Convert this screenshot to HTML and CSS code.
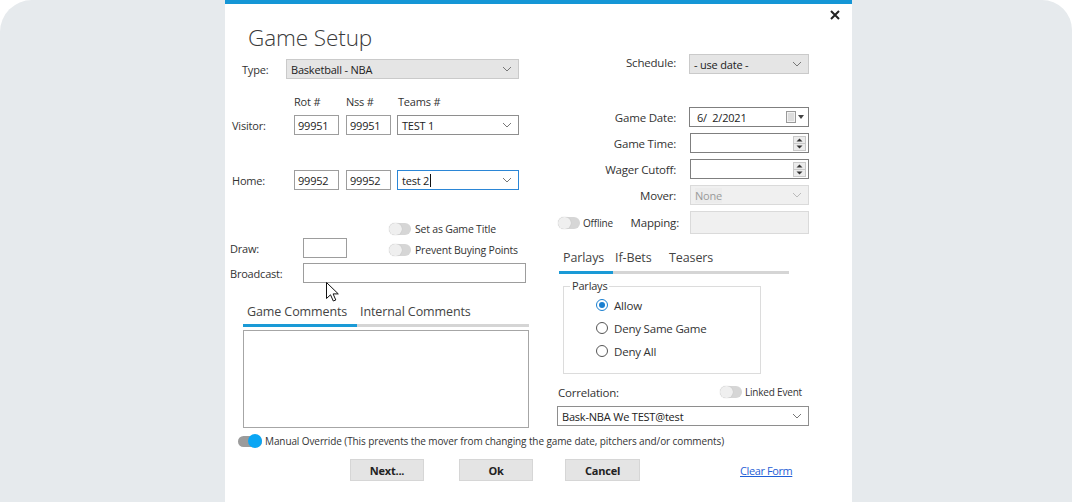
FILE: index.html
```html
<!DOCTYPE html>
<html>
<head>
<meta charset="utf-8">
<title>Game Setup</title>
<link rel="stylesheet" href="styles.css">
</head>
<body>
<div class="frame">
  <div class="dialog">
    <div class="cols">
      <div class="left">
        <h1 class="title">Game Setup</h1>
        <div class="row type-row">
          <span class="lbl w44">Type:</span>
          <div class="field select gray w233"><span>Basketball - NBA</span><svg class="chev" width="10" height="6" viewBox="0 0 10 6"><path d="M1 1l4 4 4-4" fill="none" stroke="#777" stroke-width="1"/></svg></div>
        </div>
        <div class="row heads">
          <span class="hd w52">Rot #</span><span class="hd w52">Nss #</span><span class="hd">Teams #</span>
        </div>
        <div class="row team-row visitor">
          <span class="lbl w62">Visitor:</span>
          <div class="field box w45">99951</div>
          <div class="field box w45 gap7">99951</div>
          <div class="field select combo w122 gap6"><span>TEST 1</span><svg class="chev" width="10" height="6" viewBox="0 0 10 6"><path d="M1 1l4 4 4-4" fill="none" stroke="#777" stroke-width="1"/></svg></div>
        </div>
        <div class="row team-row home">
          <span class="lbl w62">Home:</span>
          <div class="field box w45">99952</div>
          <div class="field box w45 gap7">99952</div>
          <div class="field select combo focus w122 gap6"><span>test 2<i class="caret"></i></span><svg class="chev" width="10" height="6" viewBox="0 0 10 6"><path d="M1 1l4 4 4-4" fill="none" stroke="#777" stroke-width="1"/></svg></div>
        </div>
        <div class="row tg-row1">
          <span class="toggle"><i></i></span><span class="tg-text">Set as Game Title</span>
        </div>
        <div class="row draw-row">
          <span class="lbl w73">Draw:</span>
          <div class="field box w44"></div>
          <span class="toggle tg-prevent"><i></i></span><span class="tg-text tg-prevent">Prevent Buying Points</span>
        </div>
        <div class="row bcast-row">
          <span class="lbl w73">Broadcast:</span>
          <div class="field box w223"></div>
        </div>
        <div class="row ctabs">
          <span class="tab w113">Game Comments</span><span class="tab">Internal Comments</span>
        </div>
        <div class="tabbar cbar"><div class="tabbar-on w114"></div></div>
        <div class="comments"></div>
      </div>

      <div class="right">
        <div class="close-row">
          <svg class="close" width="10" height="10" viewBox="0 0 10 10"><path d="M1 1l8 8M9 1l-8 8" stroke="#222" stroke-width="2"/></svg>
        </div>
        <div class="frow schedule">
          <span class="rlbl">Schedule:</span>
          <div class="field select gray w120"><span>- use date -</span><svg class="chev" width="10" height="6" viewBox="0 0 10 6"><path d="M1 1l4 4 4-4" fill="none" stroke="#777" stroke-width="1"/></svg></div>
        </div>
        <div class="frow gdate">
          <span class="rlbl">Game Date:</span>
          <div class="field dark w120"><span class="pad9">6/&nbsp; 2/2021</span>
            <svg class="cal" width="20" height="12" viewBox="0 0 20 12"><rect x="0.5" y="0.5" width="9" height="11" fill="#f2f2f2" stroke="#9a9a9a"/><path d="M2 3h6M2 5h6M2 7h6M2 9h6" stroke="#c8c8c8"/><path d="M12 4h6l-3 4z" fill="#444"/></svg>
          </div>
        </div>
        <div class="frow tight">
          <span class="rlbl">Game Time:</span>
          <div class="field dark w119"><span></span>
            <svg class="spin" width="13" height="15" viewBox="0 0 13 15"><rect x="0.5" y="0.5" width="12" height="14" fill="#ececec" stroke="#c9c9c9"/><path d="M0.5 7.5h12" stroke="#c9c9c9"/><path d="M3.5 5.5h6l-3-3z" fill="#333"/><path d="M3.5 9.5h6l-3 3z" fill="#333"/></svg>
          </div>
        </div>
        <div class="frow tight">
          <span class="rlbl">Wager Cutoff:</span>
          <div class="field dark w119"><span></span>
            <svg class="spin" width="13" height="15" viewBox="0 0 13 15"><rect x="0.5" y="0.5" width="12" height="14" fill="#ececec" stroke="#c9c9c9"/><path d="M0.5 7.5h12" stroke="#c9c9c9"/><path d="M3.5 5.5h6l-3-3z" fill="#333"/><path d="M3.5 9.5h6l-3 3z" fill="#333"/></svg>
          </div>
        </div>
        <div class="frow tight">
          <span class="rlbl">Mover:</span>
          <div class="field disabled w119"><span class="dis-in">None</span><svg class="chev" width="10" height="6" viewBox="0 0 10 6"><path d="M1 1l4 4 4-4" fill="none" stroke="#bbb" stroke-width="1"/></svg></div>
        </div>
        <div class="frow tight map-row">
          <span class="lblcol"><span class="toggle"><i></i></span><span class="tg-text small">Offline</span><span class="map-lbl">Mapping:</span></span>
          <div class="field disabled tall w119"></div>
        </div>
        <div class="row ptabs">
          <span class="tab w52">Parlays</span><span class="tab w54">If-Bets</span><span class="tab">Teasers</span>
        </div>
        <div class="tabbar pbar"><div class="tabbar-on w54"></div></div>
        <div class="group">
          <span class="legend">Parlays</span>
          <div class="radio-row"><span class="radio on"></span><span>Allow</span></div>
          <div class="radio-row"><span class="radio"></span><span>Deny Same Game</span></div>
          <div class="radio-row"><span class="radio"></span><span>Deny All</span></div>
        </div>
        <div class="row corr-row">
          <span class="corr-lbl">Correlation:</span>
          <span class="toggle"><i></i></span><span class="tg-text small">Linked Event</span>
        </div>
        <div class="field select combo corr-select"><span>Bask-NBA We TEST@test</span><svg class="chev" width="10" height="6" viewBox="0 0 10 6"><path d="M1 1l4 4 4-4" fill="none" stroke="#777" stroke-width="1"/></svg></div>
      </div>
    </div>

    <div class="row mo-row">
      <span class="toggle mo"><i></i></span><span class="mo-text">Manual Override (This prevents the mover from changing the game date, pitchers and/or comments)</span>
    </div>
    <div class="row btn-row">
      <button class="btn">Next...</button>
      <button class="btn ok">Ok</button>
      <button class="btn cancel">Cancel</button>
      <a class="clear" href="#">Clear Form</a>
    </div>

    <svg class="cursor" width="13" height="20" viewBox="0 0 13 20"><path d="M0.5 0.5V16.5L4.5 12.8L7.3 19L9.8 18L7.1 11.9H12.3Z" fill="#fff" stroke="#111" stroke-width="1" stroke-linejoin="round"/></svg>
  </div>
</div>
</body>
</html>
```

FILE: styles.css
```css
* { box-sizing: border-box; }
html, body { margin: 0; padding: 0; background: #ffffff; }
body {
  width: 1072px;
  height: 502px;
  overflow: hidden;
  font-family: "Open Sans", "Noto Sans", "Liberation Sans", sans-serif;
  color: #333;
}
.frame {
  height: 502px;
  background: #e6eaed;
  border-radius: 32px 30px 0 0;
  display: flex;
  padding-left: 225px;
}
.dialog {
  position: relative;
  width: 627px;
  height: 502px;
  background: #fff;
  border-top: 4px solid #1596d6;
}
.cols { display: flex; }
.left { width: 315px; }
.right { width: 312px; }
.row { display: flex; align-items: center; }

.title {
  margin: 19px 0 0 23px;
  font-size: 22.5px;
  line-height: 30px;
  font-weight: 300;
  color: #3a3a3a;
  letter-spacing: -0.1px;
}
.lbl, .hd, .rlbl, .corr-lbl, .map-lbl, .tg-text, .radio-row, .legend {
  font-size: 11px;
  color: #333;
  letter-spacing: -0.2px;
}
.w44 { width: 44px; flex: none; }
.w45 { width: 45px; flex: none; }
.w52 { width: 52px; flex: none; }
.w54 { width: 54px; flex: none; }
.w62 { width: 62px; flex: none; }
.w73 { width: 73px; flex: none; }
.w113 { width: 113px; flex: none; }
.w114 { width: 114px; flex: none; }
.w119 { width: 119px; flex: none; }
.w120 { width: 120px; flex: none; }
.w122 { width: 122px; flex: none; }
.w223 { width: 223px; flex: none; }
.w233 { width: 233px; flex: none; }
.gap6 { margin-left: 6px; }
.gap7 { margin-left: 7px; }

.field {
  height: 20px;
  border: 1px solid #a9a9a9;
  background: #fff;
  font-size: 11px;
  color: #222;
  display: flex;
  align-items: center;
  padding-left: 4px;
  letter-spacing: -0.2px;
}
.select { justify-content: space-between; padding-right: 6px; }
.select.gray { background: #e5e5e5; border-color: #cacaca; }
.combo { border-color: #8e8e8e; }
.combo.focus { border-color: #2b86d6; }
.box { border-color: #9d9d9d; padding-left: 3px; }
.dark { border-color: #7f7f7f; justify-content: space-between; padding-right: 2px; }
.pad9 { padding-left: 3px; }
.disabled {
  background: #f0f0f0;
  border-color: #dadada;
  color: #9a9a9a;
  justify-content: space-between;
  padding-right: 6px;
}
.dis-in { background: #ececec; }
.tall { height: 23px; }
.caret {
  display: inline-block;
  width: 1px;
  height: 13px;
  background: #111;
  vertical-align: -2px;
  margin-left: 1px;
}
.chev { flex: none; }

.type-row { margin-top: 6px; height: 20px; padding-left: 17px; }
.heads { margin-top: 15px; height: 14px; padding-left: 69px; }
.team-row { height: 20px; padding-left: 7px; }
.visitor { margin-top: 7px; }
.home { margin-top: 35px; }
.tg-row1 { margin-top: 32px; height: 14px; padding-left: 164px; }
.draw-row { margin-top: 2px; height: 20px; padding-left: 5px; }
.draw-row .toggle.tg-prevent { margin-left: 42px; margin-top: 4px; }
.draw-row .tg-text.tg-prevent { margin-top: 4px; }
.bcast-row { margin-top: 5px; height: 20px; padding-left: 5px; }

.toggle {
  flex: none;
  position: relative;
  width: 22px;
  height: 12px;
  border-radius: 6px;
  background: #d6d6d6;
}
.toggle i {
  position: absolute;
  left: 0;
  top: 0;
  width: 13px;
  height: 12px;
  border-radius: 6px;
  background: #efefef;
  box-shadow: 0 0 1px #b0b0b0;
}
.tg-text { margin-left: 4px; font-size: 10.5px; }
.tg-text.small { font-size: 10px; margin-left: 3px; }

.tab { font-size: 12.5px; color: #444; letter-spacing: -0.1px; }
.ctabs { margin-top: 19px; height: 18px; padding-left: 22px; }
.tabbar { height: 3px; background: #d5d5d5; }
.tabbar-on { height: 3px; background: #1a9ad6; }
.cbar { margin: 4px 0 0 18px; width: 286px; }
.comments {
  margin: 3px 0 0 18px;
  width: 286px;
  height: 98px;
  border: 1px solid #a6a6a6;
}

.close-row { padding-top: 6px; height: 16px; padding-left: 290px; }
.close { display: block; }
.frow { display: flex; align-items: center; height: 20px; }
.rlbl { width: 136px; flex: none; text-align: right; margin-right: 13px; font-size: 11.5px; }
.tight .rlbl { margin-right: 14px; }
.schedule { margin-top: 34px; }
.schedule .rlbl { position: relative; top: -2px; }
.gdate { margin-top: 33px; }
.tight { margin-top: 6px; }
.map-row { height: 23px; }
.lblcol {
  width: 136px;
  flex: none;
  display: flex;
  align-items: center;
  padding-left: 18px;
  margin-right: 14px;
}
.map-lbl { margin-left: auto; font-size: 11.5px; margin-right: -3px; }
.cal, .spin { flex: none; }

.ptabs { margin-top: 15px; height: 16px; padding-left: 23px; }
.pbar { margin: 6px 0 0 19px; width: 230px; }
.group {
  position: relative;
  margin: 12px 0 0 23px;
  width: 198px;
  height: 88px;
  border: 1px solid #dcdcdc;
  padding-top: 11px;
  padding-left: 32px;
}
.legend {
  position: absolute;
  left: 6px;
  top: -8px;
  background: #fff;
  padding: 0 2px;
  line-height: 14px;
}
.radio-row {
  display: flex;
  align-items: center;
  height: 14px;
  margin-bottom: 9px;
  font-size: 11.5px;
  color: #333;
}
.radio {
  flex: none;
  width: 12px;
  height: 12px;
  border-radius: 50%;
  border: 1px solid #555;
  margin-right: 6px;
  background: #fff;
  position: relative;
}
.radio.on { border-color: #1a7fd0; }
.radio.on::after {
  content: "";
  position: absolute;
  left: 2px;
  top: 2px;
  width: 6px;
  height: 6px;
  border-radius: 50%;
  background: #1a7fd0;
}
.corr-row { margin-top: 11px; height: 14px; padding-left: 18px; }
.corr-lbl { width: 162px; flex: none; font-size: 11.5px; }
.corr-select { margin: 7px 0 0 17px; width: 252px; }

.mo-row { margin-top: 7px; height: 12px; padding-left: 13px; }
.toggle.mo { width: 24px; height: 11px; background: #9b9b9b; }
.toggle.mo i {
  left: 10px;
  top: -1.5px;
  width: 14px;
  height: 14px;
  border-radius: 7px;
  background: #0aa6f4;
  box-shadow: none;
}
.mo-text { margin-left: 3px; font-size: 10px; color: #333; letter-spacing: -0.1px; white-space: nowrap; }

.btn-row { margin-top: 12px; height: 22px; padding-left: 125px; }
.btn {
  width: 74px;
  height: 22px;
  border: 1px solid #d6d6d6;
  background: #e4e4e4;
  font-family: "Open Sans", "Noto Sans", sans-serif;
  font-size: 11px;
  font-weight: 700;
  color: #222;
  padding: 0;
  letter-spacing: -0.2px;
}
.ok { margin-left: 35px; }
.cancel { margin-left: 32px; width: 75px; }
.clear {
  margin-left: 100px;
  font-size: 11px;
  color: #1f5fd6;
  text-decoration: underline;
  letter-spacing: -0.4px;
}

.cursor { position: absolute; left: 101px; top: 278px; }
```
